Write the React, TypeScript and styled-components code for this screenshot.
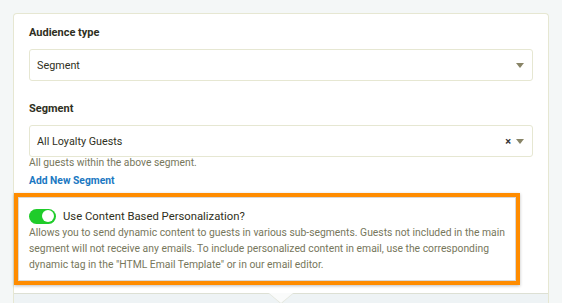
import styled, { createGlobalStyle } from "styled-components";

const GlobalStyle = createGlobalStyle`
  html, body {
    margin: 0;
    padding: 0;
    background: #f4f7f7;
    font-family: Roboto, "Liberation Sans", Arial, sans-serif;
  }
`;

const Page = styled.div`
  padding: 13px 13px 0;
  height: 303px;
  box-sizing: border-box;
  overflow: hidden;
`;

const Card = styled.div`
  background: #fff;
  border: 1px solid #e6e7d2;
  border-bottom: none;
  border-radius: 4px 4px 0 0;
`;

const Body = styled.div`
  padding: 11px 15px 0;
`;

const Field = styled.div`
  margin-bottom: 20px;
`;

const Label = styled.div`
  font-size: 11px;
  font-weight: 700;
  color: #2f2f22;
  line-height: 16px;
  margin-bottom: 8px;
`;

const Select = styled.div`
  height: 32px;
  box-sizing: border-box;
  border: 1px solid #e6e7d2;
  border-radius: 3px;
  display: flex;
  align-items: center;
  padding: 0 7px;
  font-size: 10.8px;
  color: #2f2f22;
`;

const Value = styled.span`
  flex: 1;
`;

const Clear = styled.span`
  font-size: 11px;
  font-weight: 700;
  color: #333;
  margin-right: 5px;
`;

const Caret = styled.span`
  width: 0;
  height: 0;
  border-left: 4px solid transparent;
  border-right: 4px solid transparent;
  border-top: 5px solid #888466;
  margin-right: 1px;
`;

const Help = styled.div`
  font-size: 10.3px;
  color: #77775c;
  line-height: 14px;
  margin-top: -1px;
`;

const AddLink = styled.a`
  display: block;
  font-size: 10.3px;
  font-weight: 700;
  color: #1a78c2;
  line-height: 14px;
  margin-top: 4px;
  text-decoration: none;
`;

const Highlight = styled.div`
  margin: 5px 13px 8px -15px;
  border: 4px solid #ff8c00;
  box-shadow: 0 1px 3px rgba(0, 0, 0, 0.25);
`;

const HighlightInner = styled.div`
  border: 1px solid #d8d8d8;
  padding: 10px 5px 7px 10px;
`;

const ToggleRow = styled.div`
  display: flex;
  align-items: center;
  gap: 7px;
  height: 16px;
`;

const Toggle = styled.span<{ $on: boolean }>`
  position: relative;
  width: 27px;
  height: 15px;
  border-radius: 8px;
  background: ${(p) => (p.$on ? "#1fcc2a" : "#ccc")};
  &::after {
    content: "";
    position: absolute;
    top: 1.5px;
    left: ${(p) => (p.$on ? "13px" : "1.5px")};
    width: 12px;
    height: 12px;
    border-radius: 50%;
    background: #fff;
  }
`;

const ToggleTitle = styled.span`
  font-size: 11.3px;
  color: #2f2f22;
`;

const Description = styled.p`
  margin: 1px 0 0;
  font-size: 10.35px;
  line-height: 16px;
  color: #77775c;
`;

const Footer = styled.div`
  position: relative;
  height: 20px;
  background: #eef3f5;
  border-top: 1px solid #dde0d4;
  &::before {
    content: "";
    position: absolute;
    left: 254px;
    top: -1px;
    border-left: 13px solid transparent;
    border-right: 13px solid transparent;
    border-top: 11px solid #e3e6dc;
  }
  &::after {
    content: "";
    position: absolute;
    left: 255px;
    top: -1px;
    border-left: 12px solid transparent;
    border-right: 12px solid transparent;
    border-top: 10px solid #fafbfb;
  }
`;

export default function App() {
  return (
    <Page>
      <GlobalStyle />
      <Card>
        <Body>
          <Field>
            <Label>Audience type</Label>
            <Select>
              <Value>Segment</Value>
              <Caret />
            </Select>
          </Field>
          <Label>Segment</Label>
          <Select>
            <Value>All Loyalty Guests</Value>
            <Clear>×</Clear>
            <Caret />
          </Select>
          <Help>All guests within the above segment.</Help>
          <AddLink href="#">Add New Segment</AddLink>
          <Highlight>
            <HighlightInner>
              <ToggleRow>
                <Toggle $on />
                <ToggleTitle>Use Content Based Personalization?</ToggleTitle>
              </ToggleRow>
              <Description>
                Allows you to send dynamic content to guests in various sub-segments. Guests not
                included in the main segment will not receive any emails. To include personalized
                content in email, use the corresponding dynamic tag in the "HTML Email Template" or
                in our email editor.
              </Description>
            </HighlightInner>
          </Highlight>
        </Body>
        <Footer />
      </Card>
    </Page>
  );
}
